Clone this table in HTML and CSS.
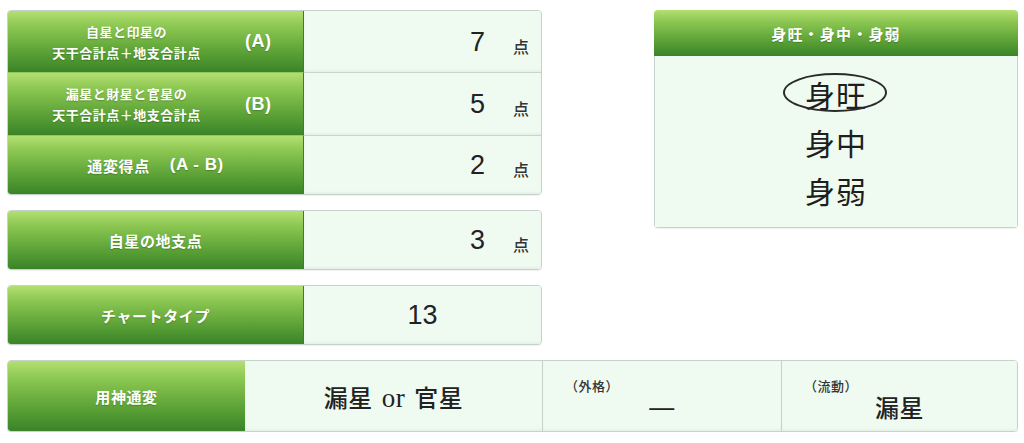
FILE: index.html
```html
<!DOCTYPE html>
<html lang="ja">
<head>
<meta charset="utf-8">
<title>通変得点</title>
<link rel="stylesheet" href="styles.css">
</head>
<body>
<div class="page">
  <div class="top">
    <div class="left">
      <div class="group g1">
        <div class="row r1">
          <div class="label duo">
            <div class="lines"><div>自星と印星の</div><div>天干合計点＋地支合計点</div></div>
            <span class="tag">(A)</span>
          </div>
          <div class="value"><span class="num">7</span><span class="unit">点</span></div>
        </div>
        <div class="row r2">
          <div class="label duo">
            <div class="lines"><div>漏星と財星と官星の</div><div>天干合計点＋地支合計点</div></div>
            <span class="tag">(B)</span>
          </div>
          <div class="value"><span class="num">5</span><span class="unit">点</span></div>
        </div>
        <div class="row r3">
          <div class="label single">通変得点<span class="tag sub">(A - B)</span></div>
          <div class="value"><span class="num">2</span><span class="unit">点</span></div>
        </div>
      </div>
      <div class="group">
        <div class="row r4">
          <div class="label single">自星の地支点</div>
          <div class="value"><span class="num">3</span><span class="unit">点</span></div>
        </div>
      </div>
      <div class="group">
        <div class="row r4">
          <div class="label single">チャートタイプ</div>
          <div class="value center"><span class="num">13</span></div>
        </div>
      </div>
    </div>
    <div class="panel">
      <div class="panel-head">身旺・身中・身弱</div>
      <div class="panel-body">
        <div class="strength"><span class="circled">身旺</span></div>
        <div class="strength">身中</div>
        <div class="strength">身弱</div>
      </div>
    </div>
  </div>
  <div class="bottom">
    <div class="label single blabel">用神通変</div>
    <div class="cell main"><span class="bigval">漏星 <span class="latin">or</span> 官星</span></div>
    <div class="cell sidecell">
      <div class="small">（外格）</div>
      <div class="sideval dash">—</div>
    </div>
    <div class="cell sidecell last">
      <div class="small">（流動）</div>
      <div class="sideval">漏星</div>
    </div>
  </div>
</div>
</body>
</html>
```

FILE: styles.css
```css
html, body {
  margin: 0;
  padding: 0;
  background: #ffffff;
}

body {
  font-family: "Noto Sans CJK JP", "Noto Sans", sans-serif;
  color: #222222;
}

.page {
  width: 1011px;
  padding: 10px 0 0 7px;
}

.top {
  display: flex;
  justify-content: space-between;
  align-items: flex-start;
}

.left {
  width: 535px;
  display: flex;
  flex-direction: column;
  gap: 15px;
}

.group {
  border: 1px solid #c5d3cc;
  border-radius: 4px;
  overflow: hidden;
  display: flex;
  flex-direction: column;
  box-shadow: 0 1px 1px rgba(0, 0, 0, 0.06);
}

.row {
  display: flex;
}

.r1 { height: 61px; }
.r2 { height: 63px; }
.r3 { height: 59px; }
.r4 { height: 58px; }

.row + .row .value {
  border-top: 1px solid #c8d5cf;
}

.row + .row .label {
  border-top: 1px solid #8fc95a;
}

.label {
  width: 296px;
  flex: none;
  box-sizing: border-box;
  background: linear-gradient(to bottom, #b3df71 0%, #8cc752 25%, #64a83b 60%, #468f2d 88%, #3c8228 100%);
  color: #ffffff;
  font-weight: 700;
  text-shadow: 0 1px 1px rgba(0, 40, 0, 0.25);
  border-right: 1px solid #3d7f28;
}

.label.duo {
  display: flex;
  align-items: center;
}

.lines {
  width: 237px;
  text-align: center;
  font-size: 13px;
  line-height: 21px;
  letter-spacing: 0.5px;
}

.tag {
  font-family: "Liberation Sans", Arial, sans-serif;
  font-size: 18px;
  letter-spacing: 0.5px;
  font-weight: 700;
}

.label.single {
  display: flex;
  align-items: center;
  justify-content: center;
  font-size: 15px;
  letter-spacing: 0.6px;
}

.tag.sub {
  margin-left: 20px;
  font-size: 17px;
  letter-spacing: 0.5px;
}

.value {
  flex: 1;
  background: #effbf1;
  display: flex;
  align-items: center;
  justify-content: flex-end;
  padding-right: 12px;
  box-sizing: border-box;
  box-shadow: inset 0 -2px 2px rgba(0, 0, 0, 0.04);
}

.num {
  font-family: "Liberation Sans", Arial, sans-serif;
  font-size: 27px;
  color: #222222;
  line-height: 30px;
}

.unit {
  font-size: 16px;
  font-weight: 500;
  color: #333333;
  margin-left: 28px;
  margin-top: 8px;
}

.value.center {
  justify-content: center;
  padding-right: 0;
}

.panel {
  width: 364px;
  flex: none;
  border-radius: 4px;
  overflow: hidden;
  box-shadow: 0 1px 1px rgba(0, 0, 0, 0.06);
}

.panel-head {
  height: 46px;
  display: flex;
  align-items: center;
  justify-content: center;
  background: linear-gradient(to bottom, #b3df71 0%, #8cc752 25%, #64a83b 60%, #468f2d 88%, #3c8228 100%);
  color: #ffffff;
  font-weight: 700;
  font-size: 15px;
  letter-spacing: 1.2px;
  text-shadow: 0 1px 1px rgba(0, 40, 0, 0.25);
}

.panel-body {
  height: 171px;
  background: #effbf1;
  border: 1px solid #c5d3cc;
  border-top: none;
  display: flex;
  flex-direction: column;
  justify-content: center;
  align-items: center;
}

.strength {
  height: 48px;
  display: flex;
  align-items: center;
  justify-content: center;
  font-size: 30px;
  letter-spacing: 1px;
  color: #1e1e1e;
}

.circled {
  position: relative;
  display: inline-block;
  line-height: 30px;
  height: 30px;
}

.circled::after {
  content: "";
  position: absolute;
  left: -22px;
  right: -20px;
  top: -6px;
  bottom: -3px;
  border: 2px solid #2a2a2a;
  border-radius: 50%;
}

.bottom {
  margin-top: 15px;
  width: 1011px;
  height: 72px;
  box-sizing: border-box;
  border: 1px solid #c5d3cc;
  border-radius: 4px;
  overflow: hidden;
  display: flex;
  box-shadow: 0 1px 1px rgba(0, 0, 0, 0.06);
}

.blabel {
  width: 237px;
  border-right: none;
}

.cell {
  background: #effbf1;
  box-sizing: border-box;
  box-shadow: inset 0 -2px 2px rgba(0, 0, 0, 0.04);
}

.cell.main {
  width: 297px;
  display: flex;
  align-items: center;
  justify-content: center;
}

.bigval {
  font-size: 24px;
  font-weight: 500;
  letter-spacing: 0.5px;
  color: #222222;
}

.latin {
  font-family: "Liberation Serif", "Times New Roman", serif;
  font-size: 27px;
  font-weight: 400;
  margin: 0 3px;
}

.sidecell {
  width: 239px;
  border-left: 1px solid #c5d3cc;
  display: flex;
  flex-direction: column;
  padding: 17px 0 0 22px;
}

.sidecell.last {
  width: 236px;
}

.small {
  font-size: 13px;
  line-height: 16px;
  letter-spacing: 0.5px;
  color: #333333;
  font-weight: 500;
}

.sideval {
  align-self: center;
  margin-left: -22px;
  margin-top: -2px;
  font-size: 24px;
  line-height: 30px;
  font-weight: 500;
  letter-spacing: 0.5px;
  color: #222222;
}

.sideval.dash {
  font-weight: 400;
  font-family: "Liberation Sans", Arial, sans-serif;
  font-size: 25px;
}
```
